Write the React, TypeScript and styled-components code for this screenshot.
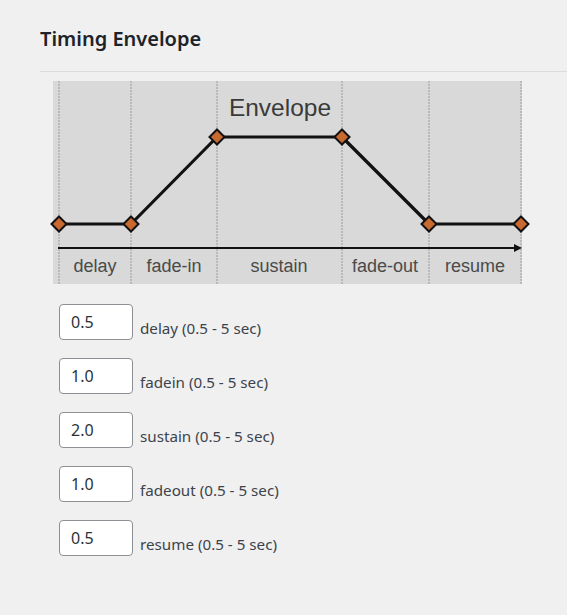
import styled, { createGlobalStyle } from 'styled-components';

const GlobalStyle = createGlobalStyle`
  body {
    margin: 0;
    background: #f0f0f1;
    font-family: "Noto Sans", "Open Sans", sans-serif;
    color: #3c434a;
  }
`;

const Page = styled.div`
  padding: 24px 0 40px 40px;
`;

const Title = styled.h2`
  margin: 0;
  padding-bottom: 18px;
  font-size: 20px;
  font-weight: 600;
  line-height: 29px;
  color: #1d2327;
  border-bottom: 1px solid #dcdcde;
`;

const Figure = styled.div`
  margin: 9px 0 0 13px;
  width: 469px;
  height: 203px;
  background: #d9d9d9;

  svg {
    display: block;
    overflow: visible;
  }
`;

const Fields = styled.div`
  display: flex;
  flex-direction: column;
  gap: 18px;
  margin: 20px 0 0 19px;
`;

const Row = styled.label`
  display: flex;
  align-items: flex-end;
  gap: 7px;
`;

const NumberInput = styled.input`
  box-sizing: border-box;
  width: 74px;
  height: 36px;
  padding: 0 11px;
  border: 1px solid #8c8f94;
  border-radius: 4px;
  background: #fff;
  font-family: inherit;
  font-size: 16px;
  color: #2c3338;
  outline: none;
`;

const Hint = styled.span`
  font-size: 15.2px;
  line-height: 20px;
  margin-bottom: 2px;
`;

const marks = [6, 78, 164, 289, 376, 468];
const points: [number, number][] = [
  [6, 143],
  [78, 143],
  [164, 56],
  [289, 56],
  [376, 143],
  [468, 143],
];
const phases = [
  { name: 'delay', x: 42 },
  { name: 'fade-in', x: 121 },
  { name: 'sustain', x: 226 },
  { name: 'fade-out', x: 332 },
  { name: 'resume', x: 422 },
];

function EnvelopeChart() {
  return (
    <svg width="469" height="203" viewBox="0 0 469 203">
      {marks.map(x => (
        <line
          key={x}
          x1={x}
          y1={0}
          x2={x}
          y2={203}
          stroke="#9a9a9a"
          strokeWidth="1"
          strokeDasharray="2 1"
        />
      ))}
      <text
        x="227"
        y="35"
        textAnchor="middle"
        fontFamily="'Liberation Sans', Arial, sans-serif"
        fontSize="24.5"
        fill="#3a3a3a"
      >
        Envelope
      </text>
      <line x1="5" y1="167" x2="462" y2="167" stroke="#111" strokeWidth="2" />
      <polygon points="461,163 469,167 461,171" fill="#111" />
      <polyline
        points={points.map(p => p.join(',')).join(' ')}
        fill="none"
        stroke="#111"
        strokeWidth="3.2"
        strokeLinejoin="round"
      />
      {points.map(([x, y]) => (
        <polygon
          key={x}
          points={`${x},${y - 7.5} ${x + 7.5},${y} ${x},${y + 7.5} ${x - 7.5},${y}`}
          fill="#c8692f"
          stroke="#111"
          strokeWidth="2"
        />
      ))}
      {phases.map(p => (
        <text
          key={p.name}
          x={p.x}
          y="191"
          textAnchor="middle"
          fontFamily="'Liberation Sans', Arial, sans-serif"
          fontSize="18"
          fill="#4a4a4a"
        >
          {p.name}
        </text>
      ))}
    </svg>
  );
}

const fields = [
  { name: 'delay', value: '0.5' },
  { name: 'fadein', value: '1.0' },
  { name: 'sustain', value: '2.0' },
  { name: 'fadeout', value: '1.0' },
  { name: 'resume', value: '0.5' },
];

export default function App() {
  return (
    <Page>
      <GlobalStyle />
      <Title>Timing Envelope</Title>
      <Figure>
        <EnvelopeChart />
      </Figure>
      <Fields>
        {fields.map(f => (
          <Row key={f.name}>
            <NumberInput type="text" defaultValue={f.value} />
            <Hint>{f.name} (0.5 - 5 sec)</Hint>
          </Row>
        ))}
      </Fields>
    </Page>
  );
}
